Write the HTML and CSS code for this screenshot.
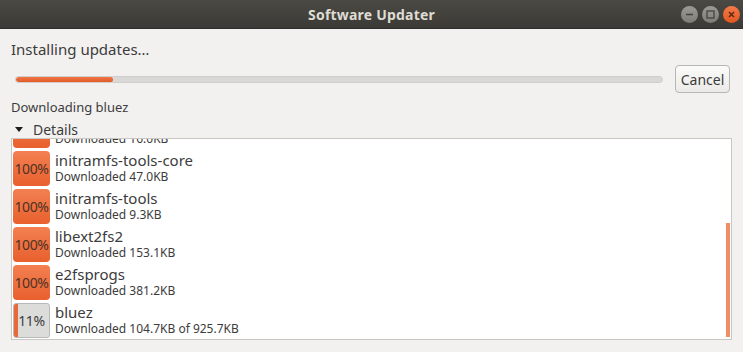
FILE: index.html
```html
<!DOCTYPE html>
<html lang="en">
<head>
    <meta charset="UTF-8">
    <title>Software Updater</title>
    <link rel="stylesheet" href="styles.css">
</head>
<body>
    <div class="window">
        <div class="titlebar">
            <span></span>
            <span class="title">Software Updater</span>
            <div class="window-buttons">
                <span class="wbtn">
                    <svg width="17" height="17" viewBox="0 0 17 17"><path d="M5 8.5h7" stroke="#46453f" stroke-width="1.6"/></svg>
                </span>
                <span class="wbtn">
                    <svg width="17" height="17" viewBox="0 0 17 17"><rect x="5" y="5" width="7" height="7" fill="none" stroke="#46453f" stroke-width="1.3"/></svg>
                </span>
                <span class="wbtn close">
                    <svg width="17" height="17" viewBox="0 0 17 17"><path d="M6 6l5 5M11 6l-5 5" stroke="#5a2a14" stroke-width="1.5"/></svg>
                </span>
            </div>
        </div>

        <div class="content">
            <div class="status">Installing updates…</div>

            <div class="progress-row">
                <div class="progress"><div class="progress-fill" style="width: 15%"></div></div>
                <button class="cancel-button">Cancel</button>
            </div>

            <div class="current">Downloading bluez</div>

            <div class="details-toggle"><span class="arrow"></span>Details</div>

            <div class="list">
                <div class="list-inner">
                    <div class="row">
                        <div class="pct done">100%</div>
                        <div class="info"><div class="name">initramfs-tools-bin</div><div class="detail">Downloaded 16.0KB</div></div>
                    </div>
                    <div class="row">
                        <div class="pct done">100%</div>
                        <div class="info"><div class="name">initramfs-tools-core</div><div class="detail">Downloaded 47.0KB</div></div>
                    </div>
                    <div class="row">
                        <div class="pct done">100%</div>
                        <div class="info"><div class="name">initramfs-tools</div><div class="detail">Downloaded 9.3KB</div></div>
                    </div>
                    <div class="row">
                        <div class="pct done">100%</div>
                        <div class="info"><div class="name">libext2fs2</div><div class="detail">Downloaded 153.1KB</div></div>
                    </div>
                    <div class="row">
                        <div class="pct done">100%</div>
                        <div class="info"><div class="name">e2fsprogs</div><div class="detail">Downloaded 381.2KB</div></div>
                    </div>
                    <div class="row">
                        <div class="pct partial"><div class="pct-fill" style="width: 11%"></div><span>11%</span></div>
                        <div class="info"><div class="name">bluez</div><div class="detail">Downloaded 104.7KB of 925.7KB</div></div>
                    </div>
                </div>
                <div class="scrollbar"></div>
            </div>
        </div>
    </div>
</body>
</html>
```

FILE: styles.css
```css
* {
    margin: 0;
    padding: 0;
    box-sizing: border-box;
}

body {
    font-family: 'Noto Sans', 'DejaVu Sans', sans-serif;
    background-color: #f2f1f0;
    color: #3c3c3c;
    width: 743px;
    height: 352px;
    overflow: hidden;
}

.titlebar {
    height: 29px;
    display: grid;
    grid-template-columns: 1fr auto 1fr;
    align-items: center;
    background: linear-gradient(#4a4944, #3b3a36);
    border-bottom: 1px solid #2f2e2b;
}

.title {
    color: #dfdbd2;
    font-weight: 700;
    font-size: 14px;
    letter-spacing: 0.2px;
}

.window-buttons {
    display: flex;
    justify-content: flex-end;
    gap: 4px;
    padding-right: 3px;
}

.wbtn {
    width: 17px;
    height: 17px;
    border-radius: 50%;
    background: linear-gradient(#9b9a95, #7d7c77);
    display: flex;
}

.wbtn.close {
    background: linear-gradient(#f47a48, #e4561f);
}

.content {
    padding: 0 11px;
}

.status {
    font-size: 15px;
    line-height: 18px;
    margin-top: 11px;
}

.progress-row {
    display: flex;
    align-items: center;
    gap: 12px;
    margin-top: 7px;
    padding-left: 4px;
    padding-right: 2px;
}

.progress {
    flex: 1;
    height: 7px;
    background-color: #d9d8d6;
    border: 1px solid #cfcecc;
    border-radius: 4px;
    overflow: hidden;
}

.progress-fill {
    height: 100%;
    background: linear-gradient(#f07646, #e25a27);
    border-radius: 4px;
}

.cancel-button {
    width: 55px;
    height: 28px;
    font-family: 'Noto Sans', 'DejaVu Sans', sans-serif;
    font-size: 14px;
    color: #3c3c3c;
    background: linear-gradient(#fbfbfa, #ebeae8);
    border: 1px solid #b7b6b2;
    border-radius: 4px;
}

.current {
    font-size: 13px;
    line-height: 16px;
    margin-top: 6px;
}

.details-toggle {
    font-size: 14px;
    line-height: 17px;
    margin-top: 6px;
    display: flex;
    align-items: center;
}

.arrow {
    width: 0;
    height: 0;
    border-left: 4px solid transparent;
    border-right: 4px solid transparent;
    border-top: 5px solid #1e1e1e;
    margin: 0 10px 0 4px;
}

.list {
    position: relative;
    height: 202px;
    background-color: #ffffff;
    border: 1px solid #c8c7c4;
    overflow: hidden;
}

.list-inner {
    margin-top: -28px;
    padding-left: 1px;
}

.row {
    height: 38px;
    display: flex;
    align-items: center;
    gap: 5px;
}

.pct {
    width: 37px;
    height: 35px;
    border-radius: 4px;
    font-size: 14px;
    letter-spacing: -0.4px;
    display: flex;
    align-items: center;
    justify-content: center;
    color: #4e3226;
}

.pct.done {
    background: linear-gradient(#f38052, #e8602d);
}

.pct.partial {
    position: relative;
    background-color: #dcdcdb;
    border: 1px solid #b9b9b7;
    border-radius: 3px;
    overflow: hidden;
    color: #3c3c3c;
}

.pct-fill {
    position: absolute;
    left: 0;
    top: 0;
    bottom: 0;
    background-color: #e86a3a;
}

.pct.partial span {
    position: relative;
}

.info {
    display: flex;
    flex-direction: column;
}

.name {
    font-size: 15px;
    line-height: 17px;
}

.detail {
    font-size: 12px;
    line-height: 15px;
}

.scrollbar {
    position: absolute;
    right: 1px;
    top: 84px;
    width: 4px;
    height: 114px;
    background-color: #ef8d66;
}
```
